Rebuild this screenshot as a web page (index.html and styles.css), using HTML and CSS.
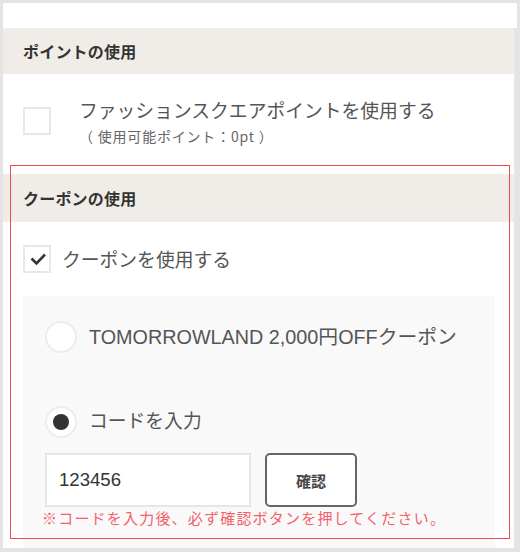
FILE: index.html
```html
<!DOCTYPE html>
<html lang="ja">
<head>
<meta charset="utf-8">
<link rel="stylesheet" href="styles.css">
</head>
<body>
<div class="frame">
  <div class="body">
    <div class="main">
      <div class="sec-head">ポイントの使用</div>
      <div class="point-row">
        <span class="cbox"></span>
        <div class="point-text">
          <div class="label">ファッションスクエアポイントを使用する</div>
          <div class="sub">（ 使用可能ポイント：0pt ）</div>
        </div>
      </div>

      <div class="sec-head coupon-head">クーポンの使用</div>
      <div class="check-row">
        <span class="cbox checked">
          <svg width="24" height="24" viewBox="0 0 24 24"><path d="M6.5 11.5 L11.5 16.5 L20 7.5" fill="none" stroke="#333" stroke-width="2.6"/></svg>
        </span>
        <span class="label">クーポンを使用する</span>
      </div>

      <div class="coupon-panel">
        <div class="radio-row">
          <span class="radio"></span>
          <span class="label latin">TOMORROWLAND 2,000円OFFクーポン</span>
        </div>
        <div class="radio-row second">
          <span class="radio on"></span>
          <span class="label">コードを入力</span>
        </div>
        <div class="code-row">
          <div class="code-input">123456</div>
          <button class="confirm">確認</button>
        </div>
        <p class="note">※コードを入力後、必ず確認ボタンを押してください。</p>
      </div>
    </div>
    <div class="track"></div>
  </div>
  <div class="highlight"></div>
</div>
</body>
</html>
```

FILE: styles.css
```css
* { box-sizing: border-box; }
html, body { margin: 0; padding: 0; }
body {
  background: #e4e4e4;
  font-family: "Liberation Sans", "Noto Sans CJK JP", sans-serif;
  color: #555;
}
.frame {
  position: relative;
  margin: 3px 3px 0 3px;
  width: 514px;
  height: 545px;
  background: #fff;
  padding-top: 25px;
  display: flex;
  flex-direction: column;
}
.body {
  flex: 1;
  display: flex;
}
.main {
  flex: 1;
  display: flex;
  flex-direction: column;
}
.track {
  width: 3px;
  background: #e3e5ea;
}
.sec-head {
  height: 46px;
  background: #f0ede8;
  padding-left: 20px;
  display: flex;
  align-items: center;
  font-family: "Noto Sans CJK JP", sans-serif;
  font-weight: 700;
  font-size: 16px;
  letter-spacing: 0.2px;
  color: #333;
}
.coupon-head {
  margin-top: 24px;
  height: 48px;
}
.point-row {
  display: flex;
  align-items: flex-start;
  padding: 24px 20px 0;
}
.cbox {
  width: 28px;
  height: 28px;
  border: 2px solid #e8e8e8;
  background: #fff;
  flex: none;
  display: flex;
  align-items: center;
  justify-content: center;
}
.point-row .cbox { margin-top: 9px; }
.point-text { margin-left: 28px; }
.label {
  font-family: "Noto Sans CJK JP", sans-serif;
  font-size: 18.8px;
  line-height: 24px;
  color: #555;
}
.latin {
  font-family: "Liberation Sans", "Noto Sans CJK JP", sans-serif;
  font-size: 19.8px;
}
.sub {
  font-family: "Noto Sans CJK JP", sans-serif;
  font-size: 14px;
  letter-spacing: 0.8px;
  line-height: 28px;
  color: #666;
}
.check-row {
  display: flex;
  align-items: center;
  padding: 23px 20px 0;
  gap: 11px;
}
.coupon-panel {
  flex: 1;
  margin: 23px 19px 0 20px;
  background: #f9f9f9;
  padding: 25px 22px 0;
}
.radio-row {
  display: flex;
  align-items: center;
  gap: 12px;
}
.radio-row.second { margin-top: 53px; }
.radio-row.second .label { margin-top: -4px; }
.radio {
  width: 32px;
  height: 32px;
  border-radius: 50%;
  border: 2px solid #ececec;
  background: #fff;
  flex: none;
  display: flex;
  align-items: center;
  justify-content: center;
}
.radio.on::after {
  content: "";
  width: 16px;
  height: 16px;
  border-radius: 50%;
  background: #333;
}
.code-row {
  display: flex;
  gap: 14px;
  margin-top: 15px;
}
.code-input {
  width: 206px;
  height: 54px;
  background: #fff;
  border: 2px solid #e6e6e6;
  padding-left: 12px;
  display: flex;
  align-items: center;
  font-family: "Liberation Sans", sans-serif;
  font-size: 18.6px;
  color: #333;
}
.confirm {
  width: 92px;
  height: 54px;
  background: #fff;
  border: 2px solid #666;
  border-radius: 5px;
  font-family: "Noto Sans CJK JP", sans-serif;
  font-weight: 700;
  font-size: 15px;
  color: #444;
  padding: 0;
}
.note {
  margin: 0 0 0 -3px;
  font-family: "Noto Sans CJK JP", sans-serif;
  font-size: 15px;
  letter-spacing: 1.2px;
  line-height: 22px;
  color: #f5606a;
}
.highlight {
  position: absolute;
  left: 7px;
  top: 162px;
  width: 500px;
  height: 374px;
  border: 1px solid #f24b4b;
  pointer-events: none;
}
```
